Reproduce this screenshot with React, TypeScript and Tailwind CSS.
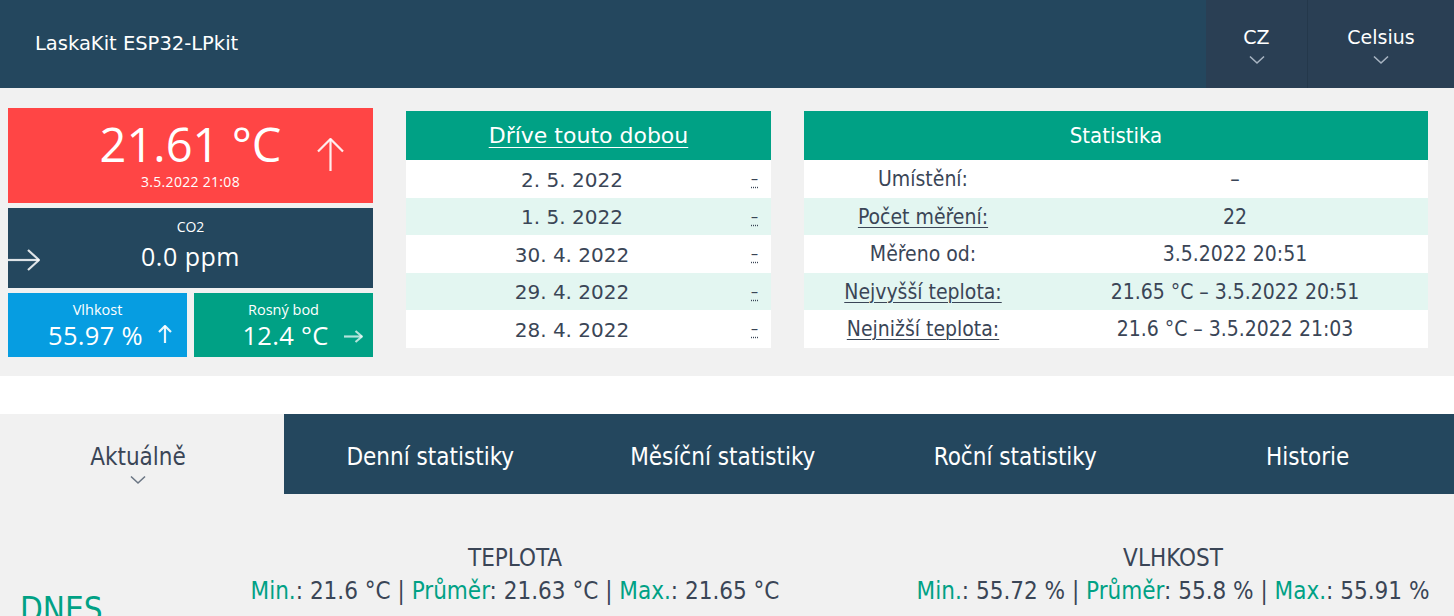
import type { ReactNode } from 'react'

const sans = "font-['DejaVu_Sans',Verdana,sans-serif]"
const narrow = "font-['DejaVu_Sans_Condensed','DejaVu_Sans',sans-serif] [font-stretch:condensed]"
const open = "font-['Open_Sans',sans-serif]"

function Chevron({ className }: { className?: string }) {
  return (
    <svg width="16" height="10" viewBox="0 0 16 10" className={className}>
      <polyline points="1,1.5 8,8 15,1.5" fill="none" stroke="currentColor" strokeWidth="1.6" />
    </svg>
  )
}

function ArrowUp({ w, h, className }: { w: number; h: number; className?: string }) {
  return (
    <svg width={w} height={h} viewBox={`0 0 ${w} ${h}`} className={className}>
      <line x1={w / 2} y1="1" x2={w / 2} y2={h} stroke="currentColor" strokeWidth="2.2" />
      <polyline points={`1,${w / 2} ${w / 2},1 ${w - 1},${w / 2}`} fill="none" stroke="currentColor" strokeWidth="2.2" />
    </svg>
  )
}

function ArrowRight({ w, h, className }: { w: number; h: number; className?: string }) {
  return (
    <svg width={w} height={h} viewBox={`0 0 ${w} ${h}`} className={className}>
      <line x1="0" y1={h / 2} x2={w - 1} y2={h / 2} stroke="currentColor" strokeWidth="2.2" />
      <polyline points={`${w - h / 2 - 1},1 ${w - 1},${h / 2} ${w - h / 2 - 1},${h - 1}`} fill="none" stroke="currentColor" strokeWidth="2.2" />
    </svg>
  )
}

const history = ['2. 5. 2022', '1. 5. 2022', '30. 4. 2022', '29. 4. 2022', '28. 4. 2022']

const stats: { label: string; value: string; link?: boolean }[] = [
  { label: 'Umístění:', value: '–' },
  { label: 'Počet měření:', value: '22', link: true },
  { label: 'Měřeno od:', value: '3.5.2022 20:51' },
  { label: 'Nejvyšší teplota:', value: '21.65 °C – 3.5.2022 20:51', link: true },
  { label: 'Nejnižší teplota:', value: '21.6 °C – 3.5.2022 21:03', link: true },
]

const tabs = ['Denní statistiky', 'Měsíční statistiky', 'Roční statistiky', 'Historie']

function Row({ i, children }: { i: number; children: ReactNode }) {
  return (
    <div className={`flex items-center h-[37.5px] ${i % 2 === 1 ? 'bg-[#e3f6f1]' : 'bg-white'}`}>
      {children}
    </div>
  )
}

function StatLine({ parts }: { parts: [string, string][] }) {
  return (
    <div className="text-[24px] leading-[30px] mt-[3px]">
      {parts.map(([k, v], i) => (
        <span key={k}>
          {i > 0 && <span className="text-[#3a4556]"> | </span>}
          <span className="text-[#00a185]">{k}</span>
          <span className="text-[#3a4556]">: {v}</span>
        </span>
      ))}
    </div>
  )
}

export default function App() {
  return (
    <div className="w-[1454px] h-[616px] overflow-hidden bg-[#f1f1f1]">
      <header className="h-[88px] bg-[#24475e] flex">
        <div className={`flex-1 flex items-center pl-[35px] text-white text-[19.5px] ${sans}`}>LaskaKit ESP32-LPkit</div>
        <div className={`w-[101px] bg-[#2a3f54] flex flex-col items-center pt-[25px] text-white text-[19px] ${sans}`}>
          <span className="leading-[24px]">CZ</span>
          <Chevron className="mt-[6px] text-[#a8b4c2]" />
        </div>
        <div className="w-px bg-[#24384b]" />
        <div className={`w-[146px] bg-[#2a3f54] flex flex-col items-center pt-[25px] text-white text-[19px] ${sans}`}>
          <span className="leading-[24px]">Celsius</span>
          <Chevron className="mt-[6px] text-[#a8b4c2]" />
        </div>
      </header>

      <section className="h-[288px] flex pl-[8px] pt-[20px] gap-[33px]">
        <div className={`w-[365px] flex flex-col gap-[5px] text-white ${open}`}>
          <div className="relative h-[95px] bg-[#ff4545] flex flex-col items-center pt-[11px]">
            <div className="text-[47px] leading-[50px]">21.61 °C</div>
            <div className="text-[14px] leading-[18px] mt-[4px] tracking-[0.3px]">3.5.2022 21:08</div>
            <ArrowUp w={27} h={33} className="absolute left-[309px] top-[30px] text-white/90" />
          </div>
          <div className="relative h-[80px] bg-[#24475e] flex flex-col items-center pt-[10px]">
            <div className="text-[14px] leading-[18px]">CO2</div>
            <div className="text-[25px] leading-[32px] mt-[4px] tracking-[0.5px]">0.0 ppm</div>
            <ArrowRight w={32} h={22} className="absolute left-0 top-[41px] text-white/85" />
          </div>
          <div className="flex gap-[7px]">
            <div className="relative w-[179px] h-[64px] bg-[#069de1] flex flex-col items-center pt-[8px]">
              <div className="text-[14.5px] leading-[18px]">Vlhkost</div>
              <div className="text-[25.5px] leading-[32px] pl-[6px] pr-[10px] tracking-[0.3px]">55.97 %</div>
              <ArrowUp w={14} h={18} className="absolute left-[150px] top-[32px] text-white/90" />
            </div>
            <div className="relative w-[179px] h-[64px] bg-[#00a185] flex flex-col items-center pt-[8px]">
              <div className="text-[14.5px] leading-[18px]">Rosný bod</div>
              <div className="text-[25.5px] leading-[32px] pl-[10px] pr-[6px] tracking-[0.3px]">12.4 °C</div>
              <ArrowRight w={19} h={13} className="absolute left-[150px] top-[37px] text-white/70" />
            </div>
          </div>
        </div>

        <div className="w-[365px] mt-[3px]">
          <div className={`h-[49px] bg-[#00a185] flex items-center justify-center text-white text-[22px] underline underline-offset-[4px] decoration-1 ${sans}`}>
            Dříve touto dobou
          </div>
          {history.map((d, i) => (
            <Row key={d} i={i}>
              <div className={`w-[332px] text-center text-[20px] text-[#3a4556] pt-[2px] ${sans}`}>{d}</div>
              <div className="flex-1 text-center text-[14px] text-[#3a4556] underline decoration-dotted underline-offset-[3px]">–</div>
            </Row>
          ))}
        </div>

        <div className="w-[624px] mt-[3px]">
          <div className={`h-[49px] bg-[#00a185] flex items-center justify-center text-white text-[22px] ${narrow}`}>
            Statistika
          </div>
          {stats.map((s, i) => (
            <Row key={s.label} i={i}>
              <div className={`w-[238px] text-center text-[21px] text-[#3a4556] pt-[2px] ${narrow}`}>
                <span className={s.link ? 'underline underline-offset-[3px] decoration-1' : ''}>{s.label}</span>
              </div>
              <div className={`flex-1 text-center text-[21px] text-[#3a4556] pt-[2px] ${narrow}`}>{s.value}</div>
            </Row>
          ))}
        </div>
      </section>

      <div className="h-[38px] bg-white" />

      <nav className={`h-[80px] flex bg-[#24475e] text-[24px] ${narrow}`}>
        <div className="w-[284px] bg-[#f1f1f1] flex flex-col items-center pt-[28px] text-[#3a4556]">
          <span className="leading-[30px] pr-[8px]">Aktuálně</span>
          <Chevron className="mt-[3px] mr-[8px] text-[#6b7684]" />
        </div>
        {tabs.map(t => (
          <div key={t} className="flex-1 flex items-center justify-center text-white pt-[5px]">
            {t}
          </div>
        ))}
      </nav>

      <section className={`flex pt-[49px] ${narrow}`}>
        <div className="w-[186px] pl-[20px] pt-[47px] text-[33px] leading-[40px] text-[#00a185]">DNES</div>
        <div className="w-[658px] flex flex-col items-center">
          <div className="text-[24px] leading-[30px] text-[#3a4556]">TEPLOTA</div>
          <StatLine parts={[['Min.', '21.6 °C'], ['Průměr', '21.63 °C'], ['Max.', '21.65 °C']]} />
        </div>
        <div className="flex-1 pl-[48px] flex flex-col items-center">
          <div className="text-[24px] leading-[30px] text-[#3a4556]">VLHKOST</div>
          <StatLine parts={[['Min.', '55.72 %'], ['Průměr', '55.8 %'], ['Max.', '55.91 %']]} />
        </div>
      </section>
    </div>
  )
}
